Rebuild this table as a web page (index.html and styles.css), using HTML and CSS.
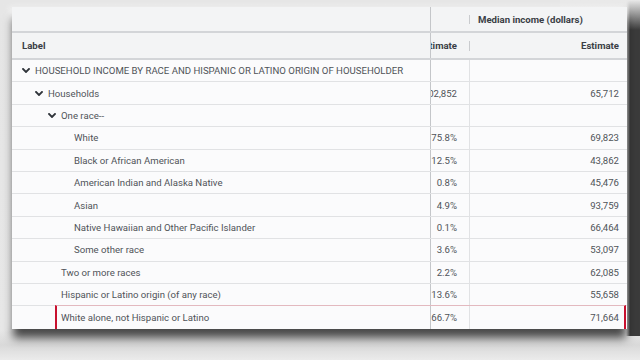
FILE: index.html
```html
<!DOCTYPE html>
<html lang="en">
<head>
<meta charset="utf-8">
<title>Household income by race</title>
<link rel="stylesheet" href="styles.css">
</head>
<body>
<div class="scene">
  <div class="sheet">
    <div class="row head head1">
      <div class="cell label"></div>
      <div class="cell pct"></div>
      <div class="cell med"><span class="grip"></span><span class="group-title">Median income (dollars)</span></div>
    </div>
    <div class="row head head2">
      <div class="cell label"><span>Label</span></div>
      <div class="cell pct"><span>Estimate</span></div>
      <div class="cell med"><span class="grip"></span><span class="est">Estimate</span></div>
    </div>

    <div class="row">
      <div class="cell label lvl0"><svg class="chev" viewBox="0 0 8 5"><path d="M1 1 L4 4 L7 1"/></svg><span>HOUSEHOLD INCOME BY RACE AND HISPANIC OR LATINO ORIGIN OF HOUSEHOLDER</span></div>
      <div class="cell pct"></div>
      <div class="cell med"></div>
    </div>
    <div class="row">
      <div class="cell label lvl1"><svg class="chev" viewBox="0 0 8 5"><path d="M1 1 L4 4 L7 1"/></svg><span>Households</span></div>
      <div class="cell pct"><span>102,852</span></div>
      <div class="cell med"><span>65,712</span></div>
    </div>
    <div class="row">
      <div class="cell label lvl2"><svg class="chev" viewBox="0 0 8 5"><path d="M1 1 L4 4 L7 1"/></svg><span>One race--</span></div>
      <div class="cell pct"></div>
      <div class="cell med"></div>
    </div>
    <div class="row">
      <div class="cell label leaf3"><span>White</span></div>
      <div class="cell pct"><span>75.8%</span></div>
      <div class="cell med"><span>69,823</span></div>
    </div>
    <div class="row">
      <div class="cell label leaf3"><span>Black or African American</span></div>
      <div class="cell pct"><span>12.5%</span></div>
      <div class="cell med"><span>43,862</span></div>
    </div>
    <div class="row">
      <div class="cell label leaf3"><span>American Indian and Alaska Native</span></div>
      <div class="cell pct"><span>0.8%</span></div>
      <div class="cell med"><span>45,476</span></div>
    </div>
    <div class="row">
      <div class="cell label leaf3"><span>Asian</span></div>
      <div class="cell pct"><span>4.9%</span></div>
      <div class="cell med"><span>93,759</span></div>
    </div>
    <div class="row">
      <div class="cell label leaf3"><span>Native Hawaiian and Other Pacific Islander</span></div>
      <div class="cell pct"><span>0.1%</span></div>
      <div class="cell med"><span>66,464</span></div>
    </div>
    <div class="row">
      <div class="cell label leaf3"><span>Some other race</span></div>
      <div class="cell pct"><span>3.6%</span></div>
      <div class="cell med"><span>53,097</span></div>
    </div>
    <div class="row">
      <div class="cell label leaf2"><span>Two or more races</span></div>
      <div class="cell pct"><span>2.2%</span></div>
      <div class="cell med"><span>62,085</span></div>
    </div>
    <div class="row">
      <div class="cell label leaf2"><span>Hispanic or Latino origin (of any race)</span></div>
      <div class="cell pct"><span>13.6%</span></div>
      <div class="cell med"><span>55,658</span></div>
    </div>
    <div class="row selected">
      <div class="cell label leaf2"><span>White alone, not Hispanic or Latino</span></div>
      <div class="cell pct"><span>66.7%</span></div>
      <div class="cell med"><span>71,664</span></div>
    </div>
  </div>
</div>
</body>
</html>
```

FILE: styles.css
```css
* { box-sizing: border-box; }

html, body {
  margin: 0;
  padding: 0;
}

body {
  width: 640px;
  height: 360px;
  overflow: hidden;
  font-family: Roboto, "Liberation Sans", Arial, sans-serif;
  font-size: 9.6px;
  color: #4f5358;
}

.scene {
  width: 640px;
  height: 360px;
  padding: 7px 0 0 12px;
  background:
    linear-gradient(to bottom, #e9e9e9 0, rgba(233,233,233,0) 30px) no-repeat 560px 0 / 80px 40px,
    linear-gradient(to right, rgba(58,58,58,0) 0, #3b3b3b 4px) no-repeat 626px 0 / 14px 336px,
    linear-gradient(to bottom, #e6e6e6 0, #e8e8e8 330px, #d9d9d9 345px, #ebebeb 360px);
}

.sheet {
  width: 615px;
  background: #fbfbfc;
  box-shadow: 0 10px 9px -1px rgba(0,0,0,0.7), -3px 0 6px rgba(255,255,255,0.6);
}

.row {
  position: relative;
  display: grid;
  grid-template-columns: 418px 39px 158px;
  height: 22.4px;
  border-bottom: 1px solid #e1e2e4;
}

.row:last-child { border-bottom: none; }

.cell {
  display: flex;
  align-items: center;
  white-space: nowrap;
  overflow: hidden;
}

.pct {
  justify-content: flex-end;
  padding-right: 12px;
  border-left: 1px solid #c4c6c9;
}

.med {
  justify-content: flex-end;
  padding-right: 8px;
  border-left: 1px solid #e1e2e4;
}

.head {
  background: #f3f4f5;
  border-bottom: 2px solid #d3d5d8;
  font-weight: 700;
  color: #3a3e45;
}

.head1 { height: 26px; }
.head2 { height: 27px; }

.head .med {
  border-left: none;
  position: relative;
}

.head1 .med {
  justify-content: flex-start;
  padding-left: 9px;
}

.grip {
  position: absolute;
  left: 0;
  top: 8px;
  bottom: 7px;
  width: 1px;
  background: #c9cbce;
}

.label { padding-left: 10px; }
.lvl0 { padding-left: 10px; }
.lvl1 { padding-left: 23px; }
.lvl2 { padding-left: 36px; }
.leaf2 { padding-left: 49px; }
.leaf3 { padding-left: 62px; }

.chev {
  width: 8px;
  height: 5px;
  margin-right: 5px;
  flex: none;
  fill: none;
  stroke: #30343a;
  stroke-width: 1.9;
  stroke-linecap: square;
}

.selected::after {
  content: "";
  position: absolute;
  left: 43px;
  right: 1px;
  top: -1px;
  bottom: 0;
  border-top: 1px solid #e3b9bf;
  border-left: 2px solid #c8102e;
  border-right: 2px solid #c8102e;
  pointer-events: none;
}
```
